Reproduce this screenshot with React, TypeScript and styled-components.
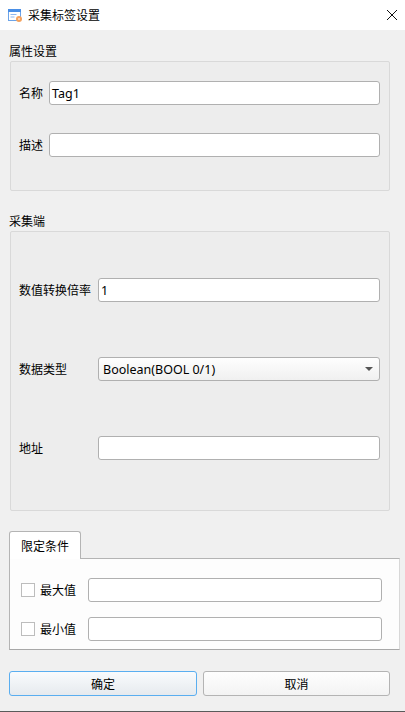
import { createGlobalStyle, styled } from "styled-components";

const GlobalStyle = createGlobalStyle`
  html, body {
    margin: 0;
    padding: 0;
    background: #f0f0f0;
  }
  body {
    font-family: "Noto Sans CJK SC", "Liberation Sans", sans-serif;
    font-size: 12px;
    color: #000;
  }
`;

const Window = styled.div`
  width: 405px;
  height: 712px;
  display: flex;
  flex-direction: column;
  box-sizing: border-box;
  border-bottom: 1px solid #5a5a5a;
  overflow: hidden;
`;

const TitleBar = styled.div`
  height: 30px;
  flex: none;
  display: flex;
  align-items: center;
  background: #fff;
  padding: 0 7px 0 8px;
  gap: 5px;
`;

const TitleText = styled.span`
  flex: 1;
  font-size: 12px;
  padding-bottom: 1px;
`;

const CloseButton = styled.button`
  width: 12px;
  height: 12px;
  padding: 0;
  border: 0;
  background: none;
  display: flex;
`;

const Content = styled.div`
  flex: 1;
  display: flex;
  flex-direction: column;
  padding: 0 5px 0 9px;
`;

const GroupTitle = styled.div<{ $top: number }>`
  height: 20px;
  line-height: 20px;
  font-size: 12px;
  margin-top: ${({ $top }) => $top}px;
`;

const GroupBox = styled.div<{ $height: number; $top: number; $gap: number }>`
  box-sizing: border-box;
  width: 380px;
  height: ${({ $height }) => $height}px;
  margin-left: 1px;
  border: 1px solid #d9d9d9;
  border-radius: 2px;
  background: #ededed;
  padding: ${({ $top }) => $top}px 9px 0 8px;
  display: flex;
  flex-direction: column;
  gap: ${({ $gap }) => $gap}px;
`;

const Row = styled.div`
  display: flex;
  align-items: center;
  height: 24px;
`;

const Label = styled.label<{ $width: number }>`
  width: ${({ $width }) => $width}px;
  flex: none;
  font-size: 12px;
  padding-bottom: 2px;
`;

const TextField = styled.div`
  flex: 1;
  box-sizing: border-box;
  height: 24px;
  line-height: 23px;
  padding: 0 2px;
  background: #fff;
  border: 1px solid #b0b0b0;
  border-radius: 3px;
  font-family: "Noto Sans", "Liberation Sans", sans-serif;
  font-size: 12.5px;
`;

const SelectField = styled(TextField)`
  display: flex;
  align-items: center;
  justify-content: space-between;
  padding: 0 6px 0 4px;
  background: linear-gradient(#fefefe, #f0f0f0);
`;

const Arrow = styled.span`
  width: 0;
  height: 0;
  border-left: 4px solid transparent;
  border-right: 4px solid transparent;
  border-top: 4px solid #555;
`;

const Tab = styled.div`
  box-sizing: border-box;
  width: 72px;
  height: 28px;
  margin-top: 20px;
  margin-bottom: -1px;
  position: relative;
  z-index: 1;
  background: #fff;
  border: 1px solid #b4b4b4;
  border-bottom: 0;
  border-radius: 3px 3px 0 0;
  text-align: center;
  line-height: 27px;
  font-size: 12px;
`;

const TabPane = styled.div`
  box-sizing: border-box;
  width: 391px;
  height: 92px;
  background: #fdfdfd;
  border: 1px solid #b4b4b4;
  border-right-color: #d8d8d8;
  border-bottom-color: #a8a8a8;
  padding: 19px 17px 0 11px;
  display: flex;
  flex-direction: column;
  gap: 15px;
`;

const CheckBox = styled.span`
  box-sizing: border-box;
  width: 14px;
  height: 14px;
  flex: none;
  margin-right: 5px;
  background: #fff;
  border: 1px solid #bdbdbd;
`;

const Buttons = styled.div`
  display: flex;
  gap: 6px;
  margin-top: 21px;
  width: 381px;
`;

const Button = styled.button<{ $primary?: boolean }>`
  flex: ${({ $primary }) => ($primary ? "0 0 188px" : "1")};
  height: 25px;
  padding: 0;
  border: 1px solid ${({ $primary }) => ($primary ? "#5aaef0" : "#b4b4b4")};
  border-radius: 3px;
  background: ${({ $primary }) =>
    $primary
      ? "linear-gradient(#f9fbfd, #e6eaee)"
      : "linear-gradient(#fefefe, #f3f3f3)"};
  font-family: inherit;
  font-size: 12px;
  color: #000;
`;

function AppIcon() {
  return (
    <svg width="15" height="15" viewBox="0 0 15 15">
      <rect x="0.5" y="1.5" width="12" height="11" fill="#fff" stroke="#6da4e8" />
      <rect x="0" y="1" width="13" height="3" fill="#4a8fe6" />
      <path d="M2.5 6.5h6M2.5 9h4" stroke="#8fb8ee" strokeWidth="1" />
      <circle cx="11" cy="11" r="3" fill="#f5a25d" />
      <circle cx="11" cy="11" r="1" fill="#fde3cd" />
    </svg>
  );
}

function CloseIcon() {
  return (
    <svg width="12" height="12" viewBox="0 0 12 12">
      <path d="M1 1l10 10M11 1L1 11" stroke="#111" strokeWidth="1" fill="none" />
    </svg>
  );
}

export default function App() {
  return (
    <>
      <GlobalStyle />
      <Window>
        <TitleBar>
          <AppIcon />
          <TitleText>采集标签设置</TitleText>
          <CloseButton>
            <CloseIcon />
          </CloseButton>
        </TitleBar>
        <Content>
          <GroupTitle $top={11}>属性设置</GroupTitle>
          <GroupBox $height={130} $top={19} $gap={28}>
            <Row>
              <Label $width={30}>名称</Label>
              <TextField>Tag1</TextField>
            </Row>
            <Row>
              <Label $width={30}>描述</Label>
              <TextField />
            </Row>
          </GroupBox>
          <GroupTitle $top={20}>采集端</GroupTitle>
          <GroupBox $height={280} $top={46} $gap={55}>
            <Row>
              <Label $width={79}>数值转换倍率</Label>
              <TextField>1</TextField>
            </Row>
            <Row>
              <Label $width={79}>数据类型</Label>
              <SelectField>
                Boolean(BOOL 0/1)
                <Arrow />
              </SelectField>
            </Row>
            <Row>
              <Label $width={79}>地址</Label>
              <TextField />
            </Row>
          </GroupBox>
          <Tab>限定条件</Tab>
          <TabPane>
            <Row>
              <CheckBox />
              <Label $width={48}>最大值</Label>
              <TextField />
            </Row>
            <Row>
              <CheckBox />
              <Label $width={48}>最小值</Label>
              <TextField />
            </Row>
          </TabPane>
          <Buttons>
            <Button $primary>确定</Button>
            <Button>取消</Button>
          </Buttons>
        </Content>
      </Window>
    </>
  );
}
